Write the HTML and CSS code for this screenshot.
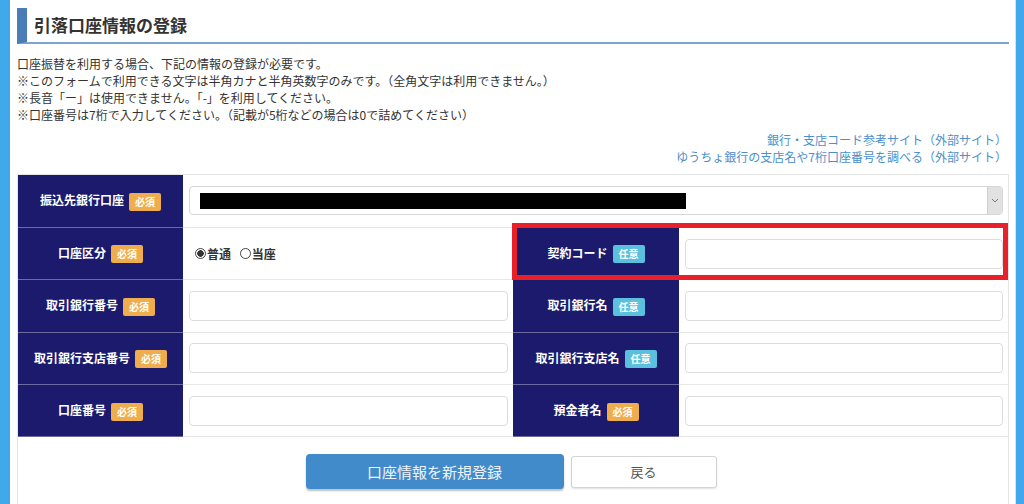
FILE: index.html
```html
<!doctype html>
<html lang="ja">
  <head>
    <meta charset="utf-8">
    <meta name="viewport" content="width=device-width, initial-scale=1">
    <title>引落口座情報の登録</title>
    <link rel="stylesheet" href="styles.css">
  </head>
<body>
  <div class="strip"></div>
  <div class="main">
    <h1>引落口座情報の登録</h1>
    <div class="intro">
      口座振替を利用する場合、下記の情報の登録が必要です。<br>
      ※このフォームで利用できる文字は半角カナと半角英数字のみです。（全角文字は利用できません。）<br>
      ※長音「ー」は使用できません。「-」を利用してください。<br>
      ※口座番号は7桁で入力してください。（記載が5桁などの場合は0で詰めてください）
    </div>
    <div class="links">
      <a href="#">銀行・支店コード参考サイト（外部サイト）</a><br>
      <a href="#">ゆうちょ銀行の支店名や7桁口座番号を調べる（外部サイト）</a>
    </div>

    <div class="formbox">
      <table class="form">
        <colgroup>
          <col class="c-label1">
          <col class="c-value1">
          <col class="c-label2">
          <col>
        </colgroup>
        <tr>
          <th>振込先銀行口座<span class="badge req">必須</span></th>
          <td colspan="3">
            <div class="select">
              <span class="redact"></span>
              <span class="arrow">
                <svg width="8" height="5" viewBox="0 0 8 5"><path d="M1 1l3 3 3-3" fill="none" stroke="#777" stroke-width="1"/></svg>
              </span>
            </div>
          </td>
        </tr>
        <tr>
          <th>口座区分<span class="badge req">必須</span></th>
          <td>
            <label class="radio first"><input type="radio" name="kind" checked>普通</label>
            <label class="radio"><input type="radio" name="kind">当座</label>
          </td>
          <th>契約コード<span class="badge opt">任意</span></th>
          <td><input type="text"></td>
        </tr>
        <tr>
          <th>取引銀行番号<span class="badge req">必須</span></th>
          <td><input type="text"></td>
          <th>取引銀行名<span class="badge opt">任意</span></th>
          <td><input type="text"></td>
        </tr>
        <tr>
          <th>取引銀行支店番号<span class="badge req">必須</span></th>
          <td><input type="text"></td>
          <th>取引銀行支店名<span class="badge opt">任意</span></th>
          <td><input type="text"></td>
        </tr>
        <tr>
          <th>口座番号<span class="badge req">必須</span></th>
          <td><input type="text"></td>
          <th>預金者名<span class="badge req">必須</span></th>
          <td><input type="text"></td>
        </tr>
      </table>

      <div class="buttons">
        <button class="btn-primary">口座情報を新規登録</button>
        <button class="btn-back">戻る</button>
      </div>

      <!-- annotation frame -->
      <div class="mark"></div>
    </div>
  </div>
  <div class="strip strip-right"></div>
</body>
</html>
```

FILE: styles.css
```css
body {
    margin: 0;
    display: flex;
    min-height: 100vh;
    font-family: "Noto Sans CJK JP", "Noto Sans", sans-serif;
    color: #333;
    background: #fff;
}

.strip {
    width: 10px;
    background-color: #3fa9ec;
}

.strip-right {
    width: 8px;
    border-left: 1px solid #d3e4f1;
}

.main {
    flex: 1;
    padding: 8px 6px 0 7px;
}

h1 {
    margin: 0;
    height: 34px;
    line-height: 33px;
    border-left: 10px solid #4a7db5;
    border-bottom: 2px solid #7ea5cd;
    padding-left: 7px;
    font-size: 17px;
    font-weight: bold;
}

.intro {
    margin-top: 11px;
    font-size: 12px;
    line-height: 17px;
}

.links {
    margin-top: 9px;
    text-align: right;
    padding-right: 2px;
    font-size: 12px;
    line-height: 16.5px;
}

.links a {
    color: #4a8fca;
    text-decoration: none;
}

.formbox {
    position: relative;
    margin-top: 9px;
    border: 1px solid #e4e4e4;
    height: 400px;
}

.form {
    width: 100%;
    border-collapse: collapse;
    table-layout: fixed;
}

.c-label1 {
    width: 165px;
}

.c-value1 {
    width: 330px;
}

.c-label2 {
    width: 166px;
}

.form tr {
    height: 52.4px;
}

.form th {
    background-color: #1c1a6c;
    color: #fff;
    font-size: 12px;
    font-weight: bold;
    text-align: center;
    border-bottom: 1px solid #6c6a9e;
    padding: 0;
    white-space: nowrap;
}

.form td {
    border-bottom: 1px solid #e6e6e6;
    padding: 0 5px 0 6px;
    font-size: 12px;
}

.badge {
    display: inline-block;
    margin-left: 5px;
    padding: 0 6px;
    height: 18px;
    line-height: 18px;
    border-radius: 2px;
    font-size: 10px;
    font-weight: bold;
    color: #fff;
    vertical-align: middle;
}

.req {
    background-color: #f0ad4e;
}

.opt {
    background-color: #5bc0de;
}

.form input[type="text"] {
    display: block;
    width: 100%;
    height: 30px;
    box-sizing: border-box;
    border: 1px solid #dcdcdc;
    border-radius: 4px;
    background: #fff;
}

.select {
    display: flex;
    align-items: center;
    height: 29px;
    box-sizing: border-box;
    border: 1px solid #d6d6d6;
    border-radius: 4px;
}

.redact {
    width: 486px;
    height: 16px;
    margin-left: 10px;
    background: #000;
}

.arrow {
    margin-left: auto;
    width: 14px;
    height: 27px;
    display: flex;
    align-items: center;
    justify-content: center;
    background: #e2e2e2;
    border-left: 1px solid #cfcfcf;
    border-radius: 0 3px 3px 0;
}

.radio {
    display: inline-flex;
    align-items: center;
    margin-right: 6px;
    font-size: 12px;
    font-weight: bold;
    color: #333;
}

.radio.first {
    margin-left: 6px;
}

.radio input {
    appearance: none;
    width: 11px;
    height: 11px;
    margin: 0 1px 0 0;
    border: 1px solid #444;
    border-radius: 50%;
    background: #fff;
}

.radio input:checked {
    background: radial-gradient(circle, #333 0 3px, #fff 3.5px);
}

.buttons {
    display: flex;
    justify-content: center;
    align-items: center;
    gap: 7px;
    padding-top: 17px;
    padding-right: 4px;
}

.btn-primary {
    width: 258px;
    height: 35px;
    border: none;
    border-radius: 4px;
    background-color: #428bca;
    color: #eef4fa;
    font-family: inherit;
    font-size: 15px;
    box-shadow: 0 2px 2px rgba(0, 0, 0, 0.25);
}

.btn-back {
    width: 146px;
    height: 32px;
    border: 1px solid #d4d4d4;
    border-radius: 3px;
    background: #fff;
    color: #555;
    font-family: inherit;
    font-size: 13px;
    box-shadow: 0 1px 2px rgba(0, 0, 0, 0.12);
}

.mark {
    position: absolute;
    left: 494px;
    top: 48px;
    width: 496px;
    height: 57px;
    box-sizing: border-box;
    border: 5px solid #e8202a;
}
```
